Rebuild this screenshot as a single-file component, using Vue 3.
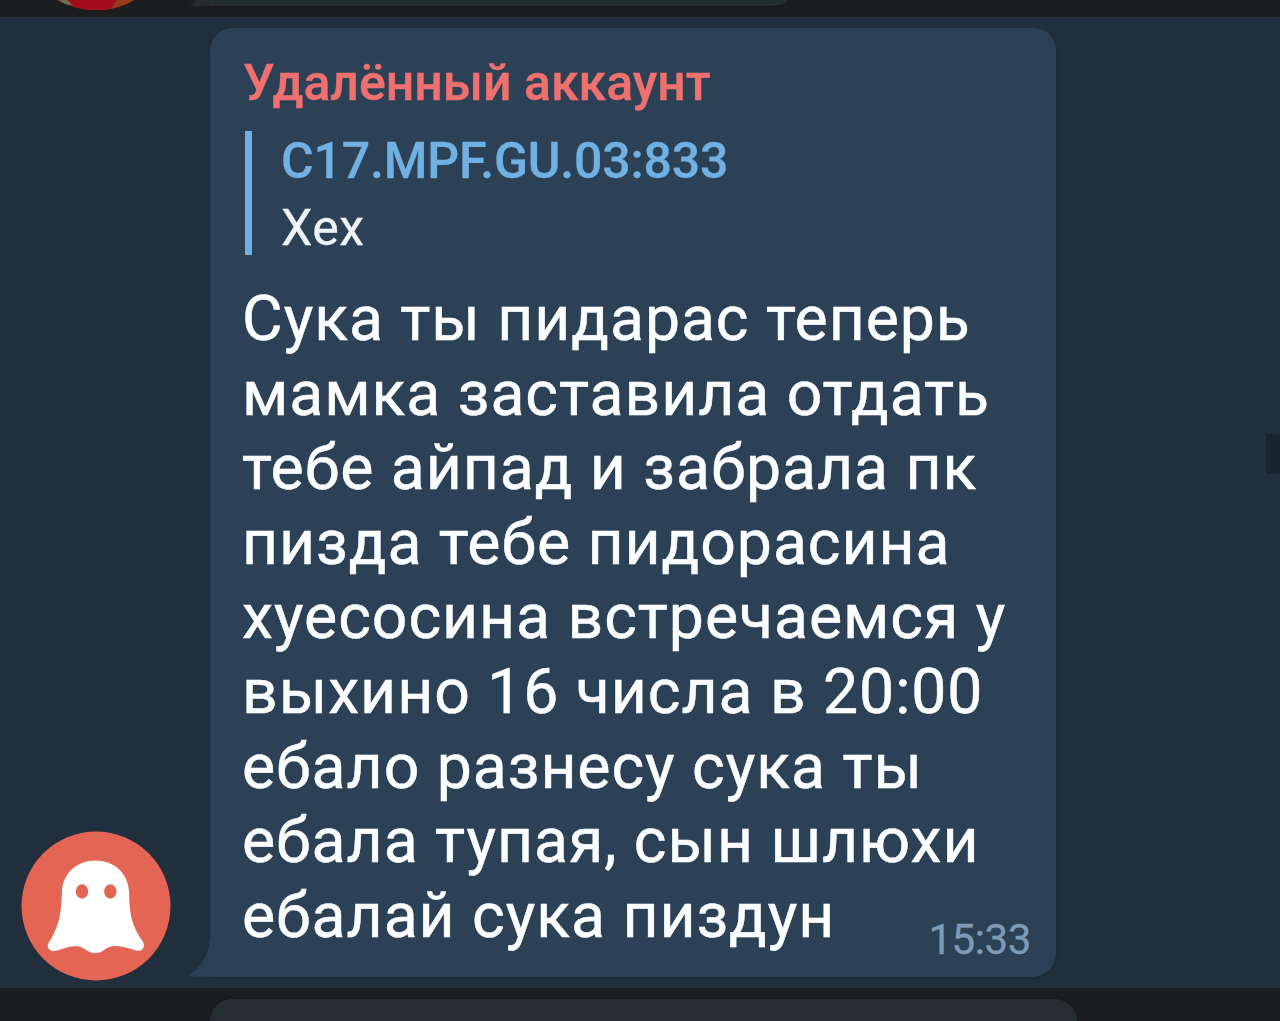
<template>
  <div class="chat">
    <div class="row row-prev">
      <div class="avatar-col">
        <svg class="avatar-strip" viewBox="0 0 150 10">
          <defs>
            <clipPath id="prevAvatar">
              <circle cx="75" cy="-64.5" r="75" />
            </clipPath>
          </defs>
          <g clip-path="url(#prevAvatar)">
            <rect width="150" height="11" fill="#a30e1c" />
            <path d="M30 0H46L52 5H30Z" fill="#6f6a58" />
            <path d="M96 0H130V11H88Z" fill="#963c1d" />
          </g>
        </svg>
      </div>
      <svg class="prev-tail" viewBox="0 0 20 6">
        <path d="M8 0H20V6H0Q4 4 8 0Z" fill="#262d31" />
      </svg>
      <div class="bubble-prev"></div>
    </div>

    <div class="row row-main">
      <div class="avatar-col">
        <svg class="avatar" viewBox="0 0 150 150">
          <circle cx="75" cy="75" r="74.5" fill="#e56555" />
          <path
            d="M74.5 29.5C93 29.5 107 42 108 60C108.5 71 108.5 83 112 92C115 101 119 106 122 111C125 117 120 121 115 119.5C106 117 99 114 90 115.5C83 117 83 122 74.5 122C66 122 65 117 58 115.5C49 114 43 117.5 34 120C29 121 25 116 27.5 112C31 107 34 101 37 92C40 83 40.5 71 41 60C42 42 56 29.5 74.5 29.5Z"
            fill="#fff"
          />
          <ellipse cx="61" cy="60.5" rx="6.2" ry="7.2" fill="#e56555" />
          <ellipse cx="89.3" cy="60.5" rx="6.2" ry="7.2" fill="#e56555" />
        </svg>
      </div>
      <svg class="tail" viewBox="0 0 22 44">
        <path d="M22 0H21C21 17 15 33 1.5 41Q-0.5 43 2 43.5H22Z" fill="#2d4156" />
      </svg>
      <div class="bubble">
        <div class="author">{{ message.author }}</div>
        <div class="quote">
          <div class="quote-name">{{ message.replyTo.name }}</div>
          <div class="quote-text">{{ message.replyTo.text }}</div>
        </div>
        <div class="text">
          <div v-for="line in message.lines" :key="line" class="line">{{ line }}</div>
        </div>
        <span class="time">{{ message.time }}</span>
      </div>
      <div class="scroll-mark"></div>
    </div>

    <div class="row row-next">
      <div class="bubble-next"></div>
    </div>
  </div>
</template>

<script setup>
const message = {
  author: 'Удалённый аккаунт',
  replyTo: {
    name: 'C17.MPF.GU.03:833',
    text: 'Хех'
  },
  lines: [
    'Сука ты пидарас теперь',
    'мамка заставила отдать',
    'тебе айпад и забрала пк',
    'пизда тебе пидорасина',
    'хуесосина встречаемся у',
    'выхино 16 числа в 20:00',
    'ебало разнесу сука ты',
    'ебала тупая, сын шлюхи',
    'ебалай сука пиздун'
  ],
  time: '15:33'
}
</script>

<style>
body {
  background: #1c1d1f;
}
</style>

<style scoped>
.chat {
  width: 1280px;
  height: 1021px;
  display: flex;
  flex-direction: column;
  overflow: hidden;
  background: #1c1d1f;
  font-family: Roboto, sans-serif;
}

.row {
  display: flex;
  box-sizing: border-box;
  flex-shrink: 0;
}

.row-prev {
  height: 17px;
}

.avatar-col {
  width: 189px;
  padding-left: 21px;
  box-sizing: border-box;
  flex-shrink: 0;
}

.avatar-strip {
  display: block;
  width: 150px;
  height: 10px;
}

.prev-tail {
  width: 20px;
  height: 6px;
}

.bubble-prev {
  width: 579px;
  height: 6px;
  background: #262d31;
  border-bottom-right-radius: 20px 6px;
  box-shadow: 0 1px 2px #141617;
}

.row-main {
  position: relative;
  height: 971px;
  padding: 11px 0 7px;
  align-items: flex-end;
  background: #212f3c;
}

.avatar {
  display: block;
  width: 150px;
  height: 150px;
}

.tail {
  position: relative;
  z-index: 1;
  width: 22px;
  height: 44px;
  margin-bottom: 4px;
  margin-right: -1px;
  flex-shrink: 0;
}

.bubble {
  position: relative;
  width: 846px;
  height: 949px;
  margin-bottom: 4px;
  padding: 25px 33px 0;
  box-sizing: border-box;
  background: #2d4156;
  border-radius: 22px 22px 24px 0;
  box-shadow: 0 1px 3px #1a2732;
}

.author {
  height: 78px;
  line-height: 60px;
  font-size: 50px;
  font-weight: 500;
  color: #ee706f;
  -webkit-text-stroke: 0.4px #ee706f;
  white-space: nowrap;
}

.quote {
  display: flex;
  flex-direction: column;
  width: 600px;
  height: 124px;
  box-sizing: border-box;
  margin-left: 2px;
  padding-left: 29px;
  border-left: 7px solid #6fb1e4;
  font-size: 50px;
  white-space: nowrap;
}

.quote-name {
  line-height: 60px;
  font-weight: 500;
  letter-spacing: -0.18px;
  color: #6fb1e4;
  -webkit-text-stroke: 0.3px #6fb1e4;
}

.quote-text {
  padding-top: 8px;
  line-height: 58px;
  letter-spacing: 0.5px;
  color: #eef3f8;
  -webkit-text-stroke: 0.3px #eef3f8;
}

.text {
  margin: 27px 0 0 -1px;
  font-size: 62.5px;
  line-height: 74.6px;
  letter-spacing: 0.95px;
  color: #fcfdfe;
  -webkit-text-stroke: 0.5px #fcfdfe;
  white-space: nowrap;
}

.time {
  position: absolute;
  right: 25px;
  bottom: 12px;
  font-size: 42px;
  line-height: 50px;
  letter-spacing: -0.4px;
  color: #7f9ab5;
  -webkit-text-stroke: 0.3px #7f9ab5;
}

.scroll-mark {
  position: absolute;
  right: 0;
  top: 417px;
  width: 14px;
  height: 40px;
  background: #1a242d;
}

.row-next {
  height: 33px;
  padding: 11px 0 0 210px;
}

.bubble-next {
  width: 867px;
  height: 60px;
  background: #262d31;
  border-radius: 22px;
  box-shadow: 0 0 3px #141617;
}
</style>
